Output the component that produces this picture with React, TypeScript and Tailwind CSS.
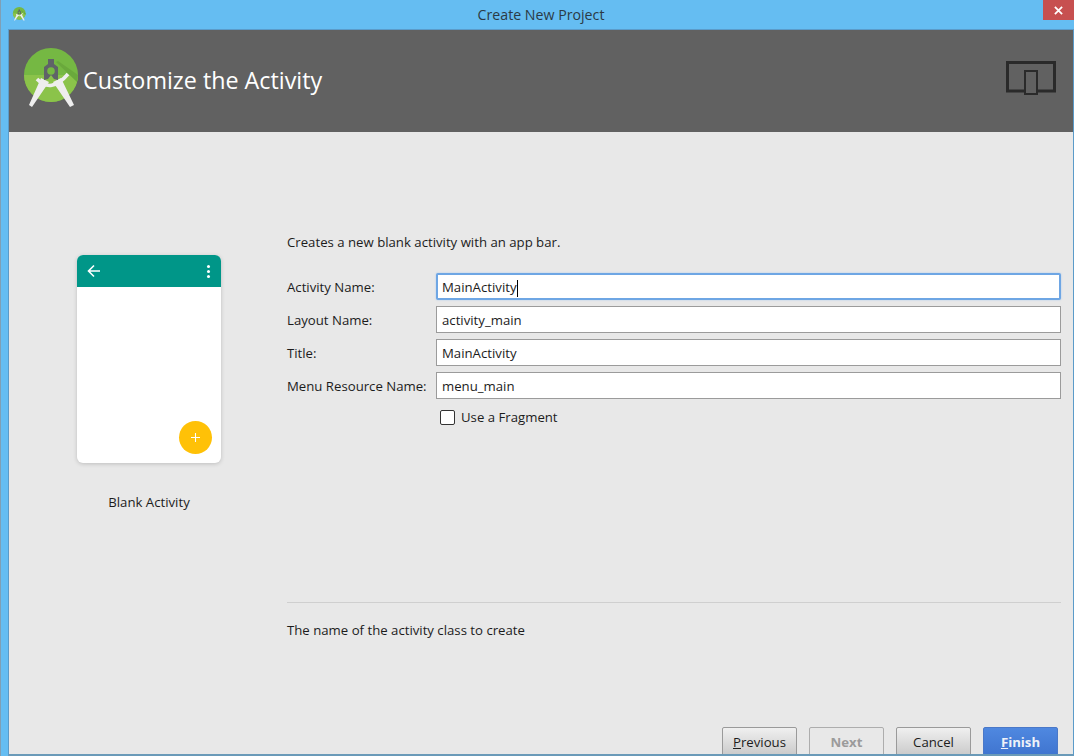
import React from 'react';

const font = "[font-family:'Open_Sans','Noto_Sans',sans-serif]";

function StudioLogo({ className }: { className: string }) {
  return (
    <svg viewBox="0 0 64 68" className={className}>
      <circle cx="31" cy="31" r="27" fill="#75b843" />
      <path d="M4 31 H58 A27 27 0 0 1 4 31 Z" fill="#8bc34a" />
      <path d="M36 18 L57 38 A27 27 0 0 0 58 31 L38 17 Z" fill="#6aa93c" />
      <path d="M17 35 Q31 50 48 30" fill="none" stroke="#eeeeee" strokeWidth="3.5" />
      <path d="M21 34 L29 38 L12 63 L9 61 Z M41 34 L33 38 L50 63 L54 61 Z" fill="#eeeeee" />
      <path d="M28 15 H34 V20 L38 23 V36 L34 35 L31 31 L28 35 L24 36 V23 L28 20 Z" fill="#5f6368" />
      <circle cx="31" cy="27" r="3.8" fill="#75b843" />
    </svg>
  );
}

function FormRow({ label, value, focused }: { label: string; value: string; focused?: boolean }) {
  return (
    <div className="flex items-start h-[33px]">
      <label className="w-[149px] shrink-0 h-[30px] flex items-center text-[13.2px] text-[#1c1c1c]">{label}</label>
      <div
        className={
          focused
            ? 'flex items-center flex-1 h-[27px] pl-[4px] pt-[3px] bg-white border-2 border-[#6ea6e4] rounded-[2px] shadow-[0_0_2px_#a9c9ef] text-[13.2px] text-[#1c1c1c]'
            : 'flex items-center flex-1 h-[27px] pl-[5px] pt-[3px] bg-white border border-[#9b9b9b] text-[13.2px] text-[#1c1c1c]'
        }
      >
        <span>{value}</span>
        {focused && <span className="w-[1px] h-[17px] bg-black" />}
      </div>
    </div>
  );
}

function WizardButton({ children, kind }: { children: React.ReactNode; kind?: 'disabled' | 'primary' }) {
  let cls = 'border-[#9a9a9a] bg-gradient-to-b from-[#f0f0f0] to-[#c9c9c9] text-[#1c1c1c]';
  if (kind === 'disabled') cls = 'border-[#adadad] bg-[#e8e8e8] text-[#9b9b9b] font-bold';
  if (kind === 'primary') cls = 'border-[#4a78c8] bg-gradient-to-b from-[#4f88e0] to-[#3f74cf] text-[#eef2f8] font-bold';
  return (
    <button type="button" className={`w-[75px] h-[30px] pt-[2px] border rounded-[2px] text-[13.2px] ${cls}`}>
      {children}
    </button>
  );
}

export default function App() {
  return (
    <div className={`w-[1074px] h-[756px] overflow-hidden flex flex-col bg-[#65bdf2] border-l border-[#7f9fb5] ${font}`}>
      <div className="h-[29px] shrink-0 flex items-start">
        <div className="w-[57px] pl-[11px] pt-[6px]">
          <StudioLogo className="w-[15px] h-[16px]" />
        </div>
        <div className="flex-1 text-center text-[14.2px] leading-[29px] text-[#2b3a45] pl-[6px]">Create New Project</div>
        <div className="w-[31px] h-[20px] ml-[25px] bg-[#c75050] flex items-center justify-center text-white">
          <svg viewBox="0 0 10 10" className="w-[9px] h-[9px]">
            <path d="M1 1 L9 9 M9 1 L1 9" stroke="white" strokeWidth="2" />
          </svg>
        </div>
      </div>

      <div className="flex-1 min-h-0 ml-[7px] border-l border-t border-r border-b-2 border-l-[#5b9bc9] border-t-[#5b9bc9] border-r-[#5b9bc9] border-b-[#6a9ab8] flex flex-col bg-[#e8e8e8]">
        <div className="h-[102px] shrink-0 bg-[#616161] flex items-center pl-[11px] pr-[17px] pb-[6px]">
          <StudioLogo className="w-[64px] h-[68px] shrink-0" />
          <h1 className="flex-1 text-[23.3px] text-white -ml-[1px] mt-[5px]">Customize the Activity</h1>
          <svg viewBox="0 0 50 34" className="w-[50px] h-[34px]" fill="none">
            <rect x="1.5" y="1.5" width="47" height="28.5" stroke="#2a2a2a" strokeWidth="3" />
            <rect x="19" y="10" width="12" height="23" fill="#616161" stroke="#2a2a2a" strokeWidth="2" />
          </svg>
        </div>

        <div className="flex-1 min-h-0 flex overflow-hidden">
          <div className="w-[278px] shrink-0 pl-[68px] pt-[123px]">
            <div className="w-[144px] h-[208px] bg-white rounded-[6px] shadow-[0_1px_4px_rgba(0,0,0,0.18)] overflow-hidden flex flex-col">
              <div className="h-[32px] shrink-0 bg-[#009688] flex items-center justify-between pl-[10px] pr-[11px]">
                <svg viewBox="0 0 14 14" className="w-[14px] h-[14px]" fill="none">
                  <path d="M13 7 H1.5 M7 1.5 L1.5 7 L7 12.5" stroke="white" strokeWidth="1.6" />
                </svg>
                <div className="flex flex-col gap-[2px]">
                  <span className="w-[3px] h-[3px] rounded-full bg-white" />
                  <span className="w-[3px] h-[3px] rounded-full bg-white" />
                  <span className="w-[3px] h-[3px] rounded-full bg-white" />
                </div>
              </div>
              <div className="flex-1 flex items-end justify-end pr-[9px] pb-[9px]">
                <div className="w-[33px] h-[33px] rounded-full bg-[#ffc107] flex items-center justify-center">
                  <svg viewBox="0 0 10 10" className="w-[9px] h-[9px]">
                    <path d="M5 0 V10 M0 5 H10" stroke="white" strokeWidth="1.2" />
                  </svg>
                </div>
              </div>
            </div>
            <p className="w-[144px] mt-[30px] text-center text-[13.2px] text-[#1c1c1c]">Blank Activity</p>
          </div>

          <div className="flex-1 min-w-0 pr-[12px] flex flex-col">
            <p className="mt-[101px] h-[18px] leading-[18px] text-[13.2px] text-[#1c1c1c]">Creates a new blank activity with an app bar.</p>
            <div className="mt-[22px] flex flex-col">
              <FormRow label="Activity Name:" value="MainActivity" focused />
              <FormRow label="Layout Name:" value="activity_main" />
              <FormRow label="Title:" value="MainActivity" />
              <FormRow label="Menu Resource Name:" value="menu_main" />
            </div>
            <div className="flex items-center h-[24px] pl-[153px] gap-[6px]">
              <span className="w-[15px] h-[15px] bg-white border border-[#333] rounded-[2px]" />
              <span className="text-[13.2px] text-[#1c1c1c] pt-[2px]">Use a Fragment</span>
            </div>
            <div className="mt-[173px] border-t border-[#cfcfcf] pt-[18px]">
              <p className="text-[13.2px] leading-[18px] text-[#1c1c1c]">The name of the activity class to create</p>
            </div>
            <div className="mt-auto -mb-[3px] flex justify-end gap-[12px] pr-[3px]">
              <WizardButton><span className="underline">P</span>revious</WizardButton>
              <WizardButton kind="disabled">Next</WizardButton>
              <WizardButton>Cancel</WizardButton>
              <WizardButton kind="primary"><span className="underline">F</span>inish</WizardButton>
            </div>
          </div>
        </div>
      </div>
    </div>
  );
}
